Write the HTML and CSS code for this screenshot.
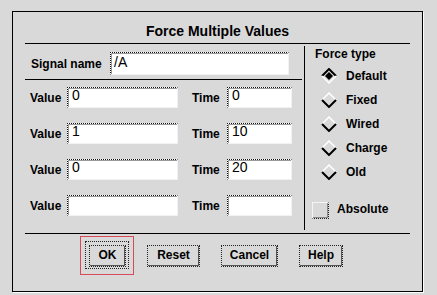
FILE: index.html
```html
<!DOCTYPE html>
<html>
<head>
<meta charset="utf-8">
<link rel="stylesheet" href="styles.css">
</head>
<body>
<div class="frame">
  <div class="title">Force Multiple Values</div>
  <div class="sep sep-full"></div>
  <div class="main">
    <div class="left">
      <div class="signal-row">
        <span class="label label-signal">Signal name</span>
        <div class="field field-signal">/A</div>
      </div>
      <div class="sep sep-left"></div>
      <div class="rows">
        <div class="vrow">
          <span class="label label-value">Value</span>
          <div class="field field-value">0</div>
          <span class="label label-time">Time</span>
          <div class="field field-time">0</div>
        </div>
        <div class="vrow">
          <span class="label label-value">Value</span>
          <div class="field field-value">1</div>
          <span class="label label-time">Time</span>
          <div class="field field-time">10</div>
        </div>
        <div class="vrow">
          <span class="label label-value">Value</span>
          <div class="field field-value">0</div>
          <span class="label label-time">Time</span>
          <div class="field field-time">20</div>
        </div>
        <div class="vrow">
          <span class="label label-value">Value</span>
          <div class="field field-value"></div>
          <span class="label label-time">Time</span>
          <div class="field field-time"></div>
        </div>
      </div>
    </div>
    <div class="vline"></div>
    <div class="right">
      <div class="heading">Force type</div>
      <div class="radios">
        <div class="radio">
          <svg class="dia" viewBox="0 0 16 16" width="16" height="16"><path class="edge-dark" d="M1 8 L8 1 L15 8"/><path class="edge-light" d="M1 8 L8 15 L15 8"/><path class="dot" d="M4 8 L8 4 L12 8 L8 12 Z"/></svg>
          <span class="label">Default</span>
        </div>
        <div class="radio">
          <svg class="dia" viewBox="0 0 16 16" width="16" height="16"><path class="edge-light" d="M1 8 L8 1 L15 8"/><path class="edge-dark" d="M1 8 L8 15 L15 8"/></svg>
          <span class="label">Fixed</span>
        </div>
        <div class="radio">
          <svg class="dia" viewBox="0 0 16 16" width="16" height="16"><path class="edge-light" d="M1 8 L8 1 L15 8"/><path class="edge-dark" d="M1 8 L8 15 L15 8"/></svg>
          <span class="label">Wired</span>
        </div>
        <div class="radio">
          <svg class="dia" viewBox="0 0 16 16" width="16" height="16"><path class="edge-light" d="M1 8 L8 1 L15 8"/><path class="edge-dark" d="M1 8 L8 15 L15 8"/></svg>
          <span class="label">Charge</span>
        </div>
        <div class="radio">
          <svg class="dia" viewBox="0 0 16 16" width="16" height="16"><path class="edge-light" d="M1 8 L8 1 L15 8"/><path class="edge-dark" d="M1 8 L8 15 L15 8"/></svg>
          <span class="label">Old</span>
        </div>
      </div>
      <div class="check">
        <span class="box"></span>
        <span class="label">Absolute</span>
      </div>
    </div>
  </div>
  <div class="sep sep-full"></div>
  <div class="buttons">
    <div class="default-ring"><button class="btn btn-ok">OK</button></div>
    <button class="btn btn-reset">Reset</button>
    <button class="btn btn-cancel">Cancel</button>
    <button class="btn btn-help">Help</button>
  </div>
</div>
</body>
</html>
```
FILE: styles.css
```css
html, body {
  margin: 0;
  padding: 0;
}
body {
  background: #d9d9d9;
  font-family: "Liberation Sans", Arial, sans-serif;
  color: #000;
  width: 437px;
  height: 295px;
  overflow: hidden;
}
.frame {
  margin: 11px 0 0 12px;
  width: 411px;
  height: 281px;
  box-sizing: border-box;
  border: 1px solid #000;
  box-shadow: 1px 1px 0 #fff;
  display: flex;
  flex-direction: column;
}
.title {
  padding-top: 11px;
  height: 17px;
  line-height: 17px;
  font-size: 14px;
  font-weight: bold;
  text-align: center;
  margin-bottom: 3px;
  flex: none;
}
.sep {
  height: 1px;
  background: #000;
  flex: none;
}
.sep-full {
  margin: 0 12px;
}
.main {
  display: flex;
  height: 189px;
  flex: none;
  padding-left: 12px;
}
.left {
  width: 279px;
  flex: none;
}
.vline {
  width: 1px;
  background: #000;
  margin: 2px 0 3px;
  flex: none;
}
.right {
  flex: 1;
}
.label {
  font-size: 12px;
  font-weight: bold;
  line-height: 14px;
  white-space: nowrap;
}
.field {
  box-sizing: border-box;
  background: #fff;
  border-top: 1px dotted #111;
  border-left: 1px dotted #111;
  border-right: 1px solid #f2f2f2;
  border-bottom: 1px solid #f2f2f2;
  box-shadow: inset 1px 1px 0 #9a9a9a;
  font-size: 14px;
  line-height: 14px;
  padding-left: 4px;
  flex: none;
}
.signal-row {
  display: flex;
  align-items: center;
  margin-top: 8px;
  height: 23px;
  padding-left: 6px;
}
.label-signal {
  width: 79px;
}
.field-signal {
  width: 179px;
  height: 23px;
  padding-top: 2px;
  padding-left: 3px;
}
.sep-left {
  width: 277px;
  margin-top: 4px;
}
.rows {
  margin-top: 7px;
  display: flex;
  flex-direction: column;
  gap: 15px;
}
.vrow {
  display: flex;
  align-items: center;
  height: 21px;
  padding-left: 5px;
}
.label-value {
  width: 37px;
}
.field-value {
  width: 111px;
  height: 21px;
}
.label-time {
  margin-left: 14px;
  width: 35px;
}
.field-time {
  width: 65px;
  height: 21px;
}
.heading {
  margin-top: 3px;
  padding-left: 10px;
  font-size: 12px;
  font-weight: bold;
  line-height: 14px;
}
.radios {
  margin-top: 3px;
}
.radio {
  height: 24px;
  display: flex;
  align-items: center;
  padding-left: 16px;
}
.radio .label {
  margin-left: 9px;
}
.dia {
  display: block;
  flex: none;
}
.edge-dark {
  fill: none;
  stroke: #000;
  stroke-width: 2;
}
.edge-light {
  fill: none;
  stroke: #fff;
  stroke-width: 1.5;
}
.dot {
  fill: #000;
}
.check {
  margin-top: 18px;
  display: flex;
  align-items: center;
  padding-left: 7px;
  height: 17px;
}
.box {
  width: 17px;
  height: 17px;
  box-sizing: border-box;
  border-style: solid dotted dotted solid;
  border-width: 1px;
  border-color: #f4f4f4 #222 #222 #f4f4f4;
  box-shadow: inset -1px -1px 0 #8a8a8a;
  flex: none;
}
.check .label {
  margin-left: 8px;
  margin-top: -3px;
}
.buttons {
  display: flex;
  gap: 21px;
  padding-left: 76px;
  margin-top: 11px;
}
.btn {
  height: 22px;
  box-sizing: border-box;
  font-family: "Liberation Sans", Arial, sans-serif;
  font-size: 12px;
  font-weight: bold;
  line-height: 14px;
  color: #000;
  background: #d9d9d9;
  border: 1px dotted #222;
  box-shadow: inset -1px -1px 0 #555;
  padding: 0 0 2px;
  margin: 0;
}
.btn-ok { width: 37px; display: block; }
.btn-reset { width: 53px; }
.btn-cancel { width: 57px; }
.btn-help { width: 44px; }
.default-ring {
  position: relative;
}
.default-ring::before {
  content: "";
  position: absolute;
  left: -4px;
  top: -4px;
  right: -3px;
  bottom: -2px;
  border: 1px dotted #222;
}
.default-ring::after {
  content: "";
  position: absolute;
  left: -9px;
  top: -9px;
  right: -8px;
  bottom: -8px;
  border: 1px solid #d64a5a;
}
```
